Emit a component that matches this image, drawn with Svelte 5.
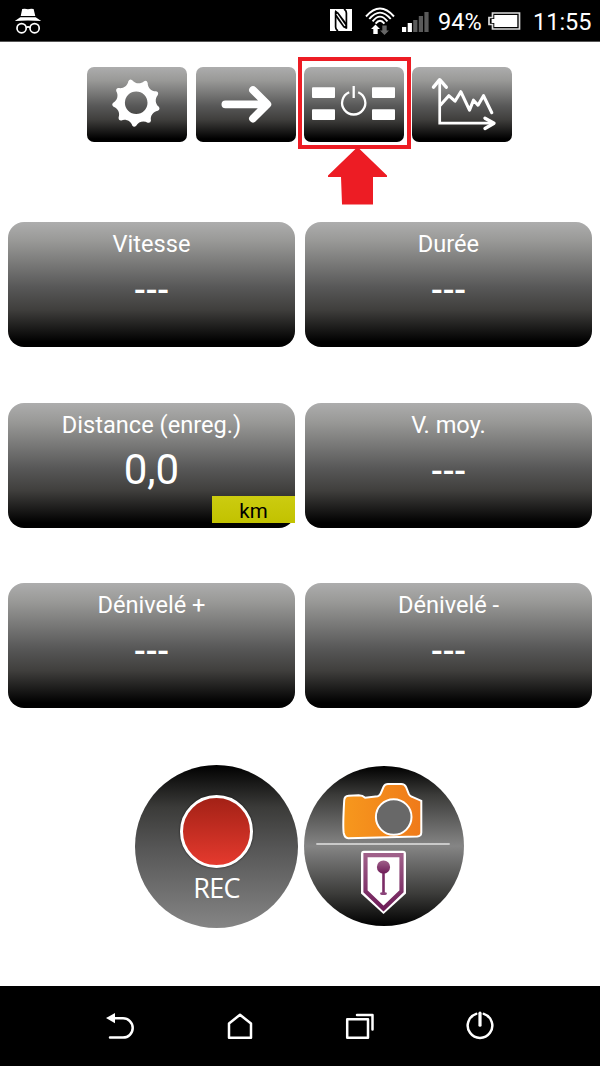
<script>
    const tiles = [
        { label: "Vitesse", value: "---" },
        { label: "Durée", value: "---" },
        { label: "Distance (enreg.)", value: "0,0", unit: "km" },
        { label: "V. moy.", value: "---" },
        { label: "Dénivelé +", value: "---" },
        { label: "Dénivelé -", value: "---" },
    ];

    const point = (r, deg) => {
        const a = (deg * Math.PI) / 180;
        return `${(r * Math.cos(a)).toFixed(2)} ${(r * Math.sin(a)).toFixed(2)}`;
    };

    // nine rounded teeth with shallow valleys between them
    function gearPath() {
        let d = "";
        for (let i = 0; i < 9; i++) {
            const a = -105 + i * 40;
            d += `${i ? "L" : "M"}${point(23, a - 5)} Q${point(25.2, a)} ${point(23, a + 5)} `;
            d += `C${point(19, a + 12)} ${point(19, a + 28)} ${point(23, a + 35)} `;
        }
        return d + "Z M11.3 0A11.3 11.3 0 1 0 -11.3 0A11.3 11.3 0 1 0 11.3 0Z";
    }
</script>

<div class="screen">
    <header class="status">
        <svg class="incognito" width="28" height="26" viewBox="0 0 28 26">
            <path d="M8.2 1 Q11 .3 14 1.2 Q17 .3 19.6 1 L21.3 8 H6.7Z M6.3 9.3 H21.7 L27.2 13 Q14 11.8 .8 13Z" fill="#fff" />
            <g fill="none" stroke="#fff" stroke-width="1.7">
                <circle cx="7.6" cy="20.2" r="4.6" />
                <circle cx="20.6" cy="20.2" r="4.6" />
                <path d="M12 19.4 Q14 18.4 16.2 19.4" />
            </g>
        </svg>
        <div class="indicators">
            <svg class="nfc" width="22" height="22" viewBox="0 0 22 22">
                <path d="M0 0H22V22H0Z" fill="#fff" />
                <path d="M5.6 2.5V18 Q5.6 20.5 8 22 M16.4 19.5V4 Q16.4 1.5 14 0" stroke="#000" stroke-width="1.7" fill="none" />
                <path d="M5 1 L8.4 3.4 L16.8 14.5 V20 L13.4 18.6 L5 7Z" fill="#000" />
                <path d="M6.8 5 L15 16.8" stroke="#fff" stroke-width="1.3" />
            </svg>
            <svg class="wifi" width="30" height="29" viewBox="0 0 30 29">
                <g fill="none" stroke="#fff" stroke-width="1.9">
                    <path d="M1 9.5 Q15 -6.5 29 9.5" />
                    <path d="M4.3 12 Q15 -.8 25.7 12" />
                    <path d="M7.6 14.4 Q15 4.8 22.4 14.4" />
                    <path d="M10.6 16.6 Q15 10.8 19.4 16.6" />
                </g>
                <path d="M10.5 17.6 L15 22 H12.7 V27 H8.3 V22 H6Z" fill="#fff" />
                <path d="M19.5 28 L24 23.4 H21.7 V18.4 H17.3 V23.4 H15Z" fill="#666" />
            </svg>
            <svg class="signal" width="27" height="20" viewBox="0 0 27 20">
                <path d="M0 15h4.2v5H0z M5.7 11h4.2v9H5.7z" fill="#fff" />
                <path d="M11.2 8h4.2v12h-4.2z M16.8 4h4.2v16h-4.2z M22.4 0h4.2v20h-4.2z" fill="#5a5a5a" />
            </svg>
            <span class="percent">94%</span>
            <svg class="battery" width="33" height="18" viewBox="0 0 33 18">
                <path d="M4.5 1H31.5V17H4.5V12.5H1V5.5H4.5Z" fill="none" stroke="#ddd" stroke-width="1.7" />
                <path d="M6.3 3H29.3V15H6.3V11H3.6V7H6.3Z" fill="#fff" />
            </svg>
            <span class="clock">11:55</span>
        </div>
    </header>

    <main>
        <div class="toolbar">
            <button class="tool" aria-label="Paramètres">
                <svg viewBox="0 0 100 75">
                    <path d={gearPath()} transform="translate(49.2 35.8)" fill="#fff" fill-rule="evenodd" />
                </svg>
            </button>
            <button class="tool" aria-label="Suivant">
                <svg viewBox="0 0 100 75">
                    <path d="M29.4 37.3H71 M57 23.1L71.3 37.3L57 51.5" fill="none" stroke="#fff" stroke-width="7.8" stroke-linecap="round" stroke-linejoin="round" />
                </svg>
            </button>
            <div class="target">
                <button class="tool" aria-label="Écran">
                    <svg viewBox="0 0 100 75">
                        <g fill="#fff">
                            <rect x="8" y="20.2" width="23" height="10.8" rx="1" />
                            <rect x="8" y="42.2" width="23" height="10.8" rx="1" />
                            <rect x="68" y="20.2" width="23" height="10.8" rx="1" />
                            <rect x="68" y="42.2" width="23" height="10.8" rx="1" />
                        </g>
                        <path d="M45.2 25.2A11.6 11.6 0 1 0 54.2 25.2 M49.7 19V31" fill="none" stroke="#fff" stroke-width="2.3" />
                    </svg>
                </button>
                <div class="frame"></div>
                <svg class="pointer" width="60" height="58" viewBox="0 0 60 58">
                    <path d="M29.5 0L59 28.5V30H45V57.5H14V57L13 30H0V28.5Z" fill="#ed1c24" />
                </svg>
            </div>
            <button class="tool" aria-label="Graphique">
                <svg viewBox="0 0 100 75">
                    <g fill="none" stroke="#fff" stroke-linecap="round" stroke-linejoin="round">
                        <path d="M27.7 13V56.2H80" stroke-width="2.7" stroke-linejoin="miter" />
                        <path d="M21.5 20.2L27.7 12.7L34.3 20.2 M73 51.2L82 56.2L73 61.5" stroke-width="3.4" />
                        <path d="M28.5 38L36.8 28.7L43 34.2L48.8 24.7L57.5 43.2L61.5 33.2L66 38.2L71.5 28.7L79.8 45.7" stroke-width="3.1" />
                    </g>
                </svg>
            </button>
        </div>

        <div class="tiles">
            {#each tiles as tile}
                <div class="tile">
                    <span class="label">{tile.label}</span>
                    <span class="value" class:empty={tile.value === "---"}>{tile.value}</span>
                    {#if tile.unit}
                        <span class="unit">{tile.unit}</span>
                    {/if}
                </div>
            {/each}
        </div>

        <div class="actions">
            <button class="rec">
                <span class="dot"></span>
                <span>REC</span>
            </button>
            <button class="camera" aria-label="Photo">
                <svg width="160" height="160" viewBox="0 0 160 160">
                    <defs>
                        <linearGradient id="orange">
                            <stop offset="0" stop-color="#f7981d" />
                            <stop offset="1" stop-color="#ef7a1a" />
                        </linearGradient>
                        <linearGradient id="purple" x2="0" y2="1">
                            <stop offset="0" stop-color="#a0608a" />
                            <stop offset="1" stop-color="#6e1c58" />
                        </linearGradient>
                    </defs>
                    <path d="M40.2 34.5 Q40.4 30 44.7 29.7 L54.7 29.3 Q58.7 29.3 61.2 31.8 L73.7 30.3 Q75.7 29.8 76.7 27.5 L79.7 20.5 Q80.9 18 84 18 H97.2 Q100.7 18 102 21 L104.9 28.2 Q105.7 30 107.7 30.7 L117.3 34.8 V66.5 Q117.2 70.3 113.2 70.5 L44.2 72.2 Q40.7 72 39.7 67 Q38.7 60 40.2 34.5Z" fill="url(#orange)" stroke="#fff" stroke-width="2" />
                    <circle cx="89.7" cy="51" r="17.8" fill="#686868" stroke="#fff" stroke-width="2" />
                    <path d="M12.3 78H145.7" stroke="#e2e2e2" stroke-width="1.7" />
                    <path d="M59.8 84.7H98.8Q102 84.7 102 87.7V127.5L79.5 148L57 127.5V87.7Q57 84.7 59.8 84.7Z" fill="#fff" />
                    <path d="M61.5 89.2H97.5V125.3L79.5 142.6L61.5 125.3Z" fill="none" stroke="url(#purple)" stroke-width="4.2" />
                    <path d="M79.5 100V127.5" stroke="#7b2c66" stroke-width="2.6" />
                    <ellipse cx="79.5" cy="127.6" rx="3.4" ry="1.5" fill="#8b457a" />
                    <circle cx="79.5" cy="101" r="6.6" fill="url(#purple)" />
                </svg>
            </button>
        </div>
    </main>

    <nav>
        <svg viewBox="0 0 40 40">
            <path d="M10.5 12.2H23A9.7 9.7 0 0 1 23 31.6H10" class="line" />
            <path d="M6 12.1L15 6.9V17.3Z" fill="#fff" />
        </svg>
        <svg viewBox="0 0 40 40">
            <path d="M9 31.8V17.4L20 8.8L31 17.4V31.8Z" class="line" />
        </svg>
        <svg viewBox="0 0 40 40">
            <path d="M7.2 13.2H28V31.8H7.2Z M17 9H32.5V23.6" class="line" />
        </svg>
        <svg viewBox="0 0 40 40">
            <path d="M16.2 7.9A12.3 12.3 0 1 0 23.8 7.9" class="line" />
            <path d="M20 7.2V19.2" class="line stem" />
        </svg>
    </nav>
</div>

<style>
    :global(body) {
        margin: 0;
        background: #fff;
    }
    .screen {
        width: 600px;
        height: 1066px;
        display: flex;
        flex-direction: column;
        background: #fff;
        color: #fff;
        font-family: Roboto, "Liberation Sans", sans-serif;
    }
    button {
        border: none;
        padding: 0;
        color: inherit;
        font: inherit;
    }
    svg {
        display: block;
        flex: none;
    }
    .status {
        height: 42px;
        box-sizing: border-box;
        padding: 0 8px 0 14px;
        display: flex;
        align-items: flex-start;
        justify-content: space-between;
        background: #000;
        border-bottom: 1px solid #555;
    }
    .incognito {
        margin-top: 8px;
    }
    .indicators {
        display: flex;
        align-items: flex-start;
        font-size: 23.5px;
        line-height: 27px;
    }
    .nfc {
        margin-top: 9px;
    }
    .wifi {
        margin: 7px 0 0 13px;
    }
    .signal {
        margin: 12px 0 0 7px;
    }
    .percent {
        width: 44px;
        margin: 9px 0 0 9px;
    }
    .battery {
        margin: 12px 0 0 6px;
    }
    .clock {
        width: 59px;
        margin: 9px 0 0 12px;
        white-space: nowrap;
    }
    main {
        flex: 1;
        display: flex;
        flex-direction: column;
        align-items: center;
    }
    .toolbar {
        display: flex;
        gap: 8.3px;
        margin-top: 24.5px;
        margin-right: 0.5px;
    }
    .tool {
        display: block;
        width: 100px;
        height: 75px;
        border-radius: 7px;
        background: linear-gradient(#adadad, #999997 18%, #585858 52%, #403f3d 70%, #000 96%);
    }
    .target {
        position: relative;
    }
    .frame {
        position: absolute;
        left: -6px;
        top: -9.5px;
        width: 105px;
        height: 84px;
        border: 4px solid #ed1c24;
    }
    .pointer {
        position: absolute;
        left: 24px;
        top: 80px;
    }
    .tiles {
        width: 584px;
        display: grid;
        grid-template-columns: 287px 287px;
        gap: 55.5px 10px;
        margin-top: 80.7px;
    }
    .tile {
        position: relative;
        height: 125px;
        display: flex;
        flex-direction: column;
        align-items: center;
        border-radius: 16px;
        background: linear-gradient(#adadad, #999997 15%, #585858 52%, #403f3d 70%, #000 96%);
    }
    .label {
        margin-top: 8px;
        font-size: 23.6px;
        line-height: 28px;
    }
    .value {
        font-size: 42px;
        line-height: 50px;
        margin-top: 6px;
    }
    .empty {
        font-size: 34.5px;
        font-weight: 500;
        margin-top: 7px;
    }
    .unit {
        position: absolute;
        right: 0;
        bottom: 5px;
        width: 83px;
        height: 27px;
        line-height: 30px;
        text-align: center;
        font-size: 20.5px;
        color: #000;
        background: linear-gradient(#cccc10, #c2c200);
    }
    .actions {
        display: flex;
        align-items: center;
        gap: 6px;
        margin: 56.5px 1px 0 0;
    }
    .rec,
    .camera {
        border-radius: 50%;
    }
    .rec {
        width: 163px;
        height: 163px;
        display: flex;
        flex-direction: column;
        align-items: center;
        background: linear-gradient(#000, #3b3b39 26%, #555 50%, #858585);
        font-family: "Open Sans", sans-serif;
        font-size: 27px;
        line-height: 36px;
        letter-spacing: -0.8px;
    }
    .dot {
        width: 67px;
        height: 67px;
        margin: 30px 0 2px;
        border: 3px solid #fff;
        border-radius: 50%;
        background: linear-gradient(#a32116, #e53a2e);
        box-shadow: 0 0 2px #111;
    }
    .camera {
        width: 160px;
        height: 160px;
        background: linear-gradient(#000, #3b3b39 18%, #858585 50%, #3b3b39 80%, #000);
    }
    nav {
        height: 80px;
        display: flex;
        justify-content: center;
        align-items: center;
        gap: 80px;
        background: #000;
    }
    nav svg {
        width: 40px;
        height: 40px;
    }
    .line {
        fill: none;
        stroke: #fff;
        stroke-width: 2.5;
        stroke-linejoin: round;
        stroke-linecap: round;
    }
    .stem {
        stroke-width: 3.2;
    }
</style>
